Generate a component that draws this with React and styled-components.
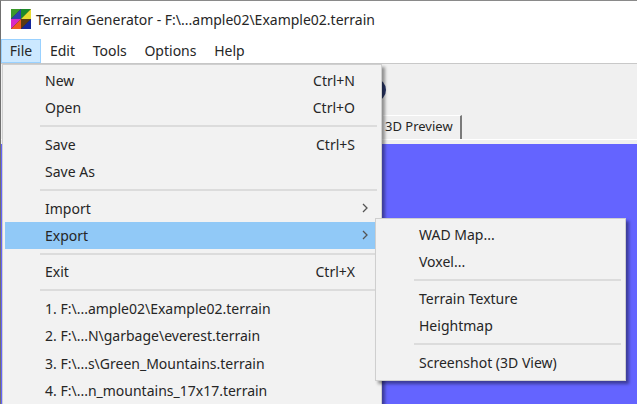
import React from 'react';
import styled, { createGlobalStyle } from 'styled-components';

const GlobalStyle = createGlobalStyle`
  html, body {
    margin: 0;
    padding: 0;
    background: #f0f0f0;
  }
  body {
    width: 637px;
    height: 404px;
    overflow: hidden;
    font-family: "Noto Sans", "Open Sans", sans-serif;
    font-size: 14px;
    color: #262626;
  }
`;

const Window = styled.div`
  position: relative;
  width: 637px;
  height: 404px;
  overflow: hidden;
  box-sizing: border-box;
  border-top: 1px solid #8a8a8a;
  border-left: 1px solid #707070;
  display: flex;
  flex-direction: column;
  background: #f0f0f0;
`;

const TitleBar = styled.div`
  height: 38px;
  flex: none;
  box-sizing: border-box;
  padding: 0 0 2px 10px;
  background: #fff;
  display: flex;
  align-items: center;
  gap: 5px;
`;

const TitleText = styled.span`
  font-size: 14px;
  white-space: nowrap;
`;

const MenuBar = styled.div`
  height: 25px;
  flex: none;
  box-sizing: border-box;
  background: #fff;
  border-bottom: 1px solid #c8c8c8;
  display: flex;
  align-items: flex-start;
`;

const MenuTitle = styled.div`
  height: 24px;
  display: flex;
  align-items: center;
  box-sizing: border-box;
  padding: 0 7.85px 2px;
  font-size: 14px;
  background: ${p => (p.$open ? '#cce8ff' : 'transparent')};
  border: 1px solid ${p => (p.$open ? '#99d1ff' : 'transparent')};
`;

const Toolbar = styled.div`
  height: 51px;
  flex: none;
  box-sizing: border-box;
  padding-left: 365px;
  display: flex;
  align-items: center;
  background: #f0f0f0;
`;

const ToolIcon = styled.div`
  width: 20px;
  height: 22px;
  border-radius: 50%;
  background: #2c3a6e;
  filter: blur(0.6px);
`;

const TabRow = styled.div`
  height: 25px;
  flex: none;
  box-sizing: border-box;
  display: flex;
  padding-left: 382px;
  border-bottom: 1px solid #fff;
`;

const Tab = styled.div`
  width: 79px;
  height: 24px;
  box-sizing: border-box;
  background: #f0f0f0;
  border-top: 1px solid #fff;
  border-right: 2px solid #7a7a7a;
  font-size: 13px;
  display: flex;
  align-items: center;
  padding: 0 0 3px 2px;
`;

const Preview = styled.div`
  flex: 1;
  background: #6464ff;
  margin-top: 4px;
`;

const Menu = styled.div`
  position: absolute;
  box-sizing: border-box;
  background: #f2f2f2;
  border: 1px solid #cfcfcf;
  box-shadow: 3px 3px 3px rgba(0, 0, 0, 0.4);
  top: ${p => p.$top}px;
  left: ${p => p.$left}px;
  width: ${p => p.$width}px;
  padding: 2px 2px ${p => p.$padBottom || 2}px;
`;

const Item = styled.div`
  height: 27.25px;
  display: flex;
  align-items: center;
  justify-content: space-between;
  box-sizing: border-box;
  padding: 0 ${p => p.$right || 24}px 0 ${p => p.$left || 40}px;
  font-size: 14px;
  white-space: nowrap;
  background: ${p => (p.$active ? '#91c9f7' : 'transparent')};
`;

const Divider = styled.div`
  height: 2px;
  background: #dcdcdc;
  margin: 3.65px 2px 3.65px ${p => p.$left || 35}px;
`;

const ArrowIcon = styled.svg`
  width: 6px;
  height: 10px;
  display: block;
  margin-right: -13px;
`;

const Arrow = () => (
  <ArrowIcon viewBox="0 0 6 10">
    <path d="M1 1l4 4-4 4" fill="none" stroke="#555" strokeWidth="1.3" />
  </ArrowIcon>
);

const AppIcon = () => (
  <svg width="20" height="20" viewBox="0 0 20 20" style={{ flex: 'none' }}>
    <rect width="20" height="20" fill="#222" />
    <polygon points="0,0 10,0 0,10" fill="#3a9a2a" />
    <polygon points="10,0 10,10 0,10" fill="#2a3fb0" />
    <polygon points="10,0 20,0 10,10" fill="#1c8a2a" />
    <polygon points="20,0 20,10 10,10" fill="#e8dc30" />
    <polygon points="0,10 10,10 0,20" fill="#d828c8" />
    <polygon points="10,10 10,20 0,20" fill="#f05a20" />
    <polygon points="10,10 20,10 10,20" fill="#5a3a10" />
    <polygon points="20,10 20,20 10,20" fill="#14269a" />
  </svg>
);

export default function App() {
  return (
    <>
      <GlobalStyle />
      <Window>
        <TitleBar>
          <AppIcon />
          <TitleText>Terrain Generator - F:\...ample02\Example02.terrain</TitleText>
        </TitleBar>
        <MenuBar>
          <MenuTitle $open>File</MenuTitle>
          <MenuTitle>Edit</MenuTitle>
          <MenuTitle>Tools</MenuTitle>
          <MenuTitle>Options</MenuTitle>
          <MenuTitle>Help</MenuTitle>
        </MenuBar>
        <Toolbar>
          <ToolIcon />
        </Toolbar>
        <TabRow>
          <Tab>3D Preview</Tab>
        </TabRow>
        <Preview />

        <Menu $top={63} $left={1} $width={380}>
          <Item><span>New</span><span>Ctrl+N</span></Item>
          <Item><span>Open</span><span>Ctrl+O</span></Item>
          <Divider />
          <Item><span>Save</span><span>Ctrl+S</span></Item>
          <Item><span>Save As</span></Item>
          <Divider />
          <Item><span>Import</span><Arrow /></Item>
          <Item $active><span>Export</span><Arrow /></Item>
          <Divider />
          <Item><span>Exit</span><span>Ctrl+X</span></Item>
          <Divider />
          <Item><span>1. F:\...ample02\Example02.terrain</span></Item>
          <Item><span>2. F:\...N\garbage\everest.terrain</span></Item>
          <Item><span>3. F:\...s\Green_Mountains.terrain</span></Item>
          <Item><span>4. F:\...n_mountains_17x17.terrain</span></Item>
        </Menu>

        <Menu $top={217} $left={374} $width={251} $padBottom={4}>
          <Item $left={41}><span>WAD Map...</span></Item>
          <Item $left={41}><span>Voxel...</span></Item>
          <Divider $left={36} />
          <Item $left={41}><span>Terrain Texture</span></Item>
          <Item $left={41}><span>Heightmap</span></Item>
          <Divider $left={36} />
          <Item $left={41}><span>Screenshot (3D View)</span></Item>
        </Menu>
      </Window>
    </>
  );
}
